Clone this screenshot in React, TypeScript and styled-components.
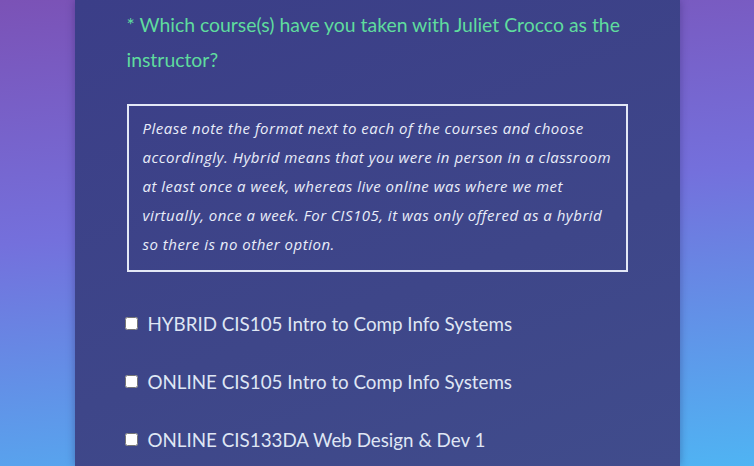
import React from "react";
import styled, { createGlobalStyle } from "styled-components";

const Global = createGlobalStyle`
  html, body { margin: 0; padding: 0; }
  body {
    width: 754px;
    height: 466px;
    overflow: hidden;
    background: linear-gradient(174deg, #7b52b6 0%, #7470dc 45%, #4fb4f3 100%);
    font-family: Lato, "Noto Sans", sans-serif;
  }
`;

const Page = styled.div`
  display: flex;
  justify-content: center;
  height: 466px;
`;

const Panel = styled.main`
  width: 605px;
  height: 466px;
  box-sizing: border-box;
  padding: 7px 52px 0 52px;
  background: linear-gradient(160deg, #3b3e88 0%, #3e4689 60%, #404c8c 100%);
  box-shadow: 0 0 8px rgba(30, 20, 80, 0.35);
`;

const Question = styled.h2`
  margin: 0;
  font-weight: 400;
  font-size: 19.4px;
  line-height: 35px;
  color: #5fdc9e;
`;

const Note = styled.div`
  margin-top: 27px;
  width: 501px;
  box-sizing: border-box;
  border: 2px solid #e3e8f6;
  padding: 8px 4px 11px 14px;
  font-family: "Open Sans", "Noto Sans", sans-serif;
  font-style: italic;
  font-size: 15px;
  letter-spacing: 0.5px;
  line-height: 29px;
  white-space: nowrap;
  color: #e9edf9;
`;

const Options = styled.div`
  margin-top: 35px;
  display: flex;
  flex-direction: column;
  gap: 25px;
`;

const Option = styled.label`
  display: flex;
  align-items: center;
  gap: 10px;
  height: 33px;
  font-size: 18.8px;
  color: #dfe6f4;
`;

const Box = styled.input`
  margin: 0 0 0 -2px;
  width: 13px;
  height: 13px;
`;

const courses = [
  "HYBRID CIS105 Intro to Comp Info Systems",
  "ONLINE CIS105 Intro to Comp Info Systems",
  "ONLINE CIS133DA Web Design & Dev 1",
];

const noteLines = [
  "Please note the format next to each of the courses and choose",
  "accordingly. Hybrid means that you were in person in a classroom",
  "at least once a week, whereas live online was where we met",
  "virtually, once a week. For CIS105, it was only offered as a hybrid",
  "so there is no other option.",
];

export default function App() {
  return (
    <>
      <Global />
      <Page>
        <Panel>
          <Question>* Which course(s) have you taken with Juliet Crocco as the instructor?</Question>
          <Note>
            {noteLines.map((l, i) => (
              <React.Fragment key={i}>
                {l}
                {i < noteLines.length - 1 && <br />}
              </React.Fragment>
            ))}
          </Note>
          <Options>
            {courses.map((c) => (
              <Option key={c}>
                <Box type="checkbox" />
                {c}
              </Option>
            ))}
          </Options>
        </Panel>
      </Page>
    </>
  );
}
